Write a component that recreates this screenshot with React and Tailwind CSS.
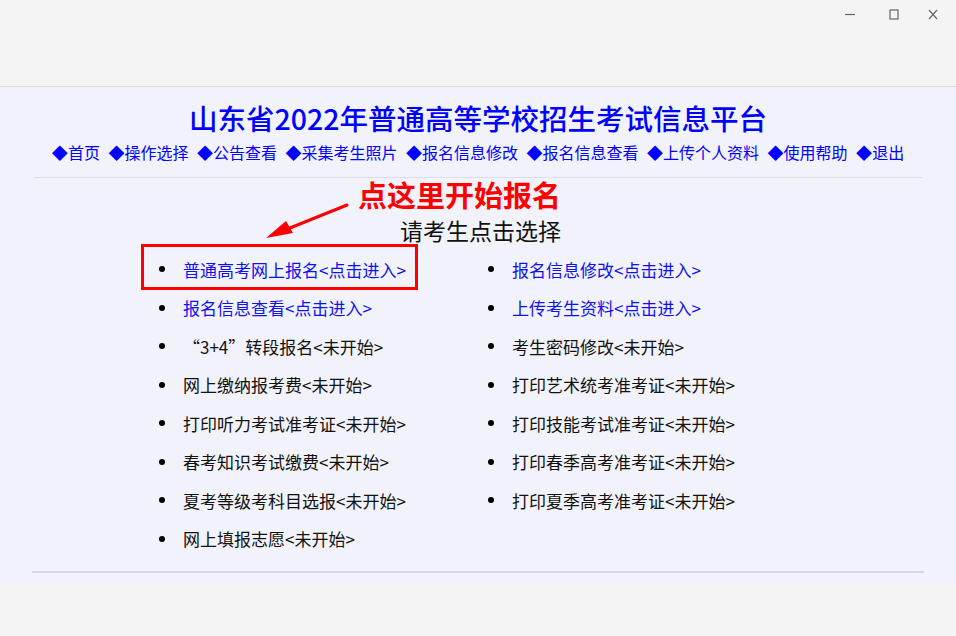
import React from 'react';

const FONT = { fontFamily: '"Microsoft YaHei", "Noto Sans CJK SC", "Noto Sans", sans-serif' };

const navItems = ['首页', '操作选择', '公告查看', '采集考生照片', '报名信息修改', '报名信息查看', '上传个人资料', '使用帮助', '退出'];

const leftItems = [
  { text: '普通高考网上报名<点击进入>', link: true, boxed: true },
  { text: '报名信息查看<点击进入>', link: true },
  { text: '“3+4”转段报名<未开始>' },
  { text: '网上缴纳报考费<未开始>' },
  { text: '打印听力考试准考证<未开始>' },
  { text: '春考知识考试缴费<未开始>' },
  { text: '夏考等级考科目选报<未开始>' },
  { text: '网上填报志愿<未开始>' },
];

const rightItems = [
  { text: '报名信息修改<点击进入>', link: true },
  { text: '上传考生资料<点击进入>', link: true },
  { text: '考生密码修改<未开始>' },
  { text: '打印艺术统考准考证<未开始>' },
  { text: '打印技能考试准考证<未开始>' },
  { text: '打印春季高考准考证<未开始>' },
  { text: '打印夏季高考准考证<未开始>' },
];

const Item = ({ item }) => (
  <li className="relative flex items-center h-[38.5px] pl-[4px]">
    <span className="w-[6px] h-[6px] rounded-full bg-black shrink-0" />
    <span className={`ml-[18px] text-[17px] whitespace-nowrap ${item.link ? 'text-[#1010f0]' : 'text-[#111]'}`}>
      {item.text}
    </span>
    {item.boxed && (
      <span className="absolute left-[-14px] top-[-6px] w-[277px] h-[46px] border-[3px] border-[#ff0000]" />
    )}
  </li>
);

export default function App() {
  return (
    <div className="w-[956px] h-[636px] bg-[#f4f4f4] overflow-hidden" style={FONT}>
      <div className="h-[87px] border-b border-[#dcdcdc] relative">
        <div className="absolute right-0 top-0 flex items-center h-[30px]">
          <svg width="44" height="30" viewBox="0 0 44 30"><line x1="17" y1="14.5" x2="27" y2="14.5" stroke="#666" strokeWidth="1.2" /></svg>
          <svg width="44" height="30" viewBox="0 0 44 30"><rect x="18" y="10" width="8" height="9" fill="none" stroke="#666" strokeWidth="1.2" /></svg>
          <svg width="40" height="30" viewBox="0 0 40 30"><path d="M13 10 L21 19 M21 10 L13 19" stroke="#666" strokeWidth="1.2" /></svg>
        </div>
      </div>

      <div className="bg-[#f2f3fa] px-[32px] pt-[13px] pb-[11px]">
        <h1 className="text-center text-[28.5px] leading-[36px] font-medium text-[#0000ff]">山东省2022年普通高等学校招生考试信息平台</h1>
        <div className="mt-[4px] text-center text-[16px] leading-[24px] text-[#0000ff] whitespace-nowrap">
          {navItems.map((n, i) => (
            <span key={n} className={i > 0 ? 'ml-[8.5px]' : ''}>◆{n}</span>
          ))}
        </div>
        <div className="mt-[13px] mx-[2px] h-px bg-[#dcdcf0]" />

        <div className="relative">
          <div className="pl-[326px] text-[29px] leading-[32px] font-bold text-[#ff0000]">点这里开始报名</div>
          <svg className="absolute left-[198px] top-[10px]" width="130" height="50" viewBox="0 0 130 50">
            <line x1="117" y1="17" x2="50" y2="44" stroke="#ff0000" strokeWidth="3" strokeLinecap="round" />
            <polygon points="36,50 56,33 63,45" fill="#ff0000" />
          </svg>
          <div className="mt-[5px] pl-[368px] text-[23px] leading-[30px] text-[#111]">请考生点击选择</div>
        </div>

        <div className="mt-[5px] pl-[123px] flex">
          <ul className="w-[329px]">
            {leftItems.map((it) => <Item key={it.text} item={it} />)}
          </ul>
          <ul className="w-[329px]">
            {rightItems.map((it) => <Item key={it.text} item={it} />)}
          </ul>
        </div>

        <div className="mt-[13px] h-[2px] bg-[#d6d6fa]" />
      </div>
    </div>
  );
}
